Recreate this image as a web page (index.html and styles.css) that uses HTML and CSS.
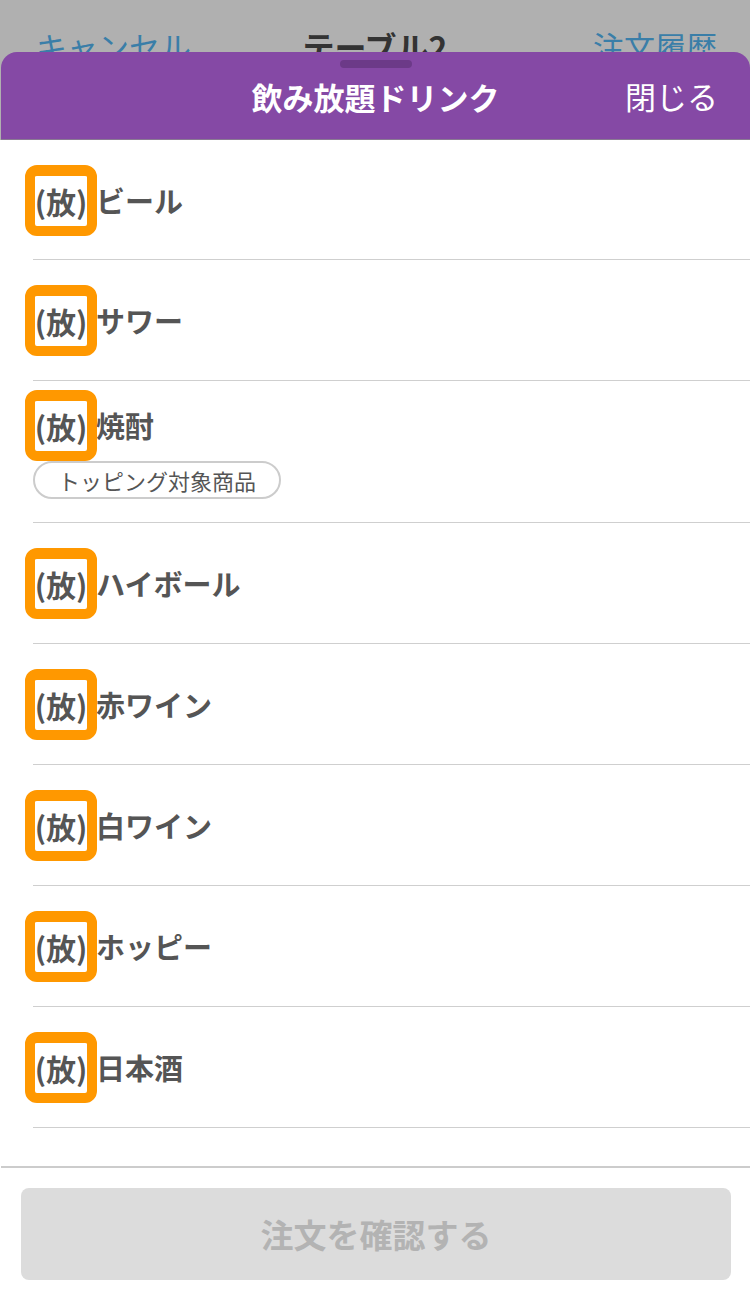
FILE: index.html
```html
<!DOCTYPE html>
<html lang="ja">
<head>
<meta charset="utf-8">
<link rel="stylesheet" href="styles.css">
</head>
<body>
<div class="page">
  <div class="nav">
    <span class="nav-link">キャンセル</span>
    <span class="nav-title">テーブル2</span>
    <span class="nav-link nav-right">注文履歴</span>
  </div>
  <div class="sheet">
    <div class="sheet-head">
      <div class="handle"></div>
      <div class="sheet-title">飲み放題ドリンク</div>
      <div class="sheet-close">閉じる</div>
    </div>
    <div class="list">
      <div class="row">
        <div class="item"><span class="badge">(放)</span><span class="name">ビール</span></div>
      </div>
      <div class="row">
        <div class="item"><span class="badge">(放)</span><span class="name">サワー</span></div>
      </div>
      <div class="row row-tag">
        <div class="item"><span class="badge">(放)</span><span class="name">焼酎</span></div>
        <span class="tag">トッピング対象商品</span>
      </div>
      <div class="row">
        <div class="item"><span class="badge">(放)</span><span class="name">ハイボール</span></div>
      </div>
      <div class="row">
        <div class="item"><span class="badge">(放)</span><span class="name">赤ワイン</span></div>
      </div>
      <div class="row">
        <div class="item"><span class="badge">(放)</span><span class="name">白ワイン</span></div>
      </div>
      <div class="row">
        <div class="item"><span class="badge">(放)</span><span class="name">ホッピー</span></div>
      </div>
      <div class="row">
        <div class="item"><span class="badge">(放)</span><span class="name">日本酒</span></div>
      </div>
    </div>
    <div class="footer">
      <div class="confirm">注文を確認する</div>
    </div>
  </div>
</div>
</body>
</html>
```

FILE: styles.css
```css
* { box-sizing: border-box; }
html, body {
  margin: 0;
  padding: 0;
  background: #fff;
}
body {
  font-family: "Noto Sans CJK JP", "Noto Sans", sans-serif;
  width: 750px;
  height: 1298px;
  overflow: hidden;
}
.page {
  width: 750px;
  height: 1298px;
  display: flex;
  flex-direction: column;
  background: #fff;
}
.nav {
  height: 52px;
  flex: none;
  overflow: hidden;
  background: #b0b0b0;
  display: grid;
  grid-template-columns: 1fr auto 1fr;
  padding: 29px 33px 0 36px;
  font-size: 31px;
  line-height: 34px;
}
.nav-link {
  color: #3a7ea8;
}
.nav-right {
  text-align: right;
}
.nav-title {
  color: #333;
  font-weight: bold;
  font-size: 32px;
  padding-right: 3px;
}
.sheet {
  flex: 1;
  background: linear-gradient(#b0b0b0 0, #b0b0b0 88px, #fff 88px);
  display: flex;
  flex-direction: column;
}
.sheet-head {
  position: relative;
  height: 88px;
  flex: none;
  background: #8549a5;
  border-radius: 16px 16px 0 0;
  border-bottom: 1px solid #8a7a93;
  margin-left: 1px;
  display: flex;
  align-items: center;
  justify-content: center;
  padding-top: 2px;
}
.handle {
  position: absolute;
  top: 8px;
  left: 339px;
  width: 72px;
  height: 8px;
  border-radius: 4px;
  background: #6c3a88;
}
.sheet-title {
  color: #fff;
  font-size: 31px;
  font-weight: bold;
  line-height: 40px;
}
.sheet-close {
  position: absolute;
  right: 32px;
  top: 24px;
  color: #fff;
  font-size: 31px;
  line-height: 40px;
}
.list {
  flex: 1;
}
.row {
  margin-left: 33px;
  border-bottom: 1px solid #cfcfcf;
  padding: 25px 0 23px;
  display: flex;
  flex-direction: column;
  align-items: flex-start;
}
.row + .row {
  padding-bottom: 24px;
}
.row.row-tag {
  padding: 9px 0 23px;
}
.item {
  display: flex;
  align-items: center;
  margin-left: -8px;
  height: 71px;
}
.badge {
  width: 72px;
  height: 71px;
  border: 10px solid #ff9800;
  border-top-width: 11px;
  border-radius: 12px;
  display: flex;
  align-items: center;
  justify-content: center;
  font-size: 30px;
  font-weight: bold;
  color: #555;
  white-space: nowrap;
  line-height: 1;
}
.name {
  font-size: 29px;
  font-weight: bold;
  color: #555;
  line-height: 1;
  margin-left: -1px;
}
.tag {
  display: inline-flex;
  align-items: center;
  height: 38px;
  padding: 0 23px 0 23px;
  border: 2px solid #cccccc;
  border-radius: 19px;
  font-size: 22px;
  color: #555;
  line-height: 1;
}
.footer {
  flex: none;
  border-top: 2px solid #cccccc;
  margin-left: 1px;
  padding: 20px 19px 18px 20px;
}
.confirm {
  height: 92px;
  border-radius: 8px;
  background: #dcdcdc;
  color: #b3b3b3;
  font-size: 33px;
  font-weight: bold;
  display: flex;
  align-items: center;
  justify-content: center;
}
```
